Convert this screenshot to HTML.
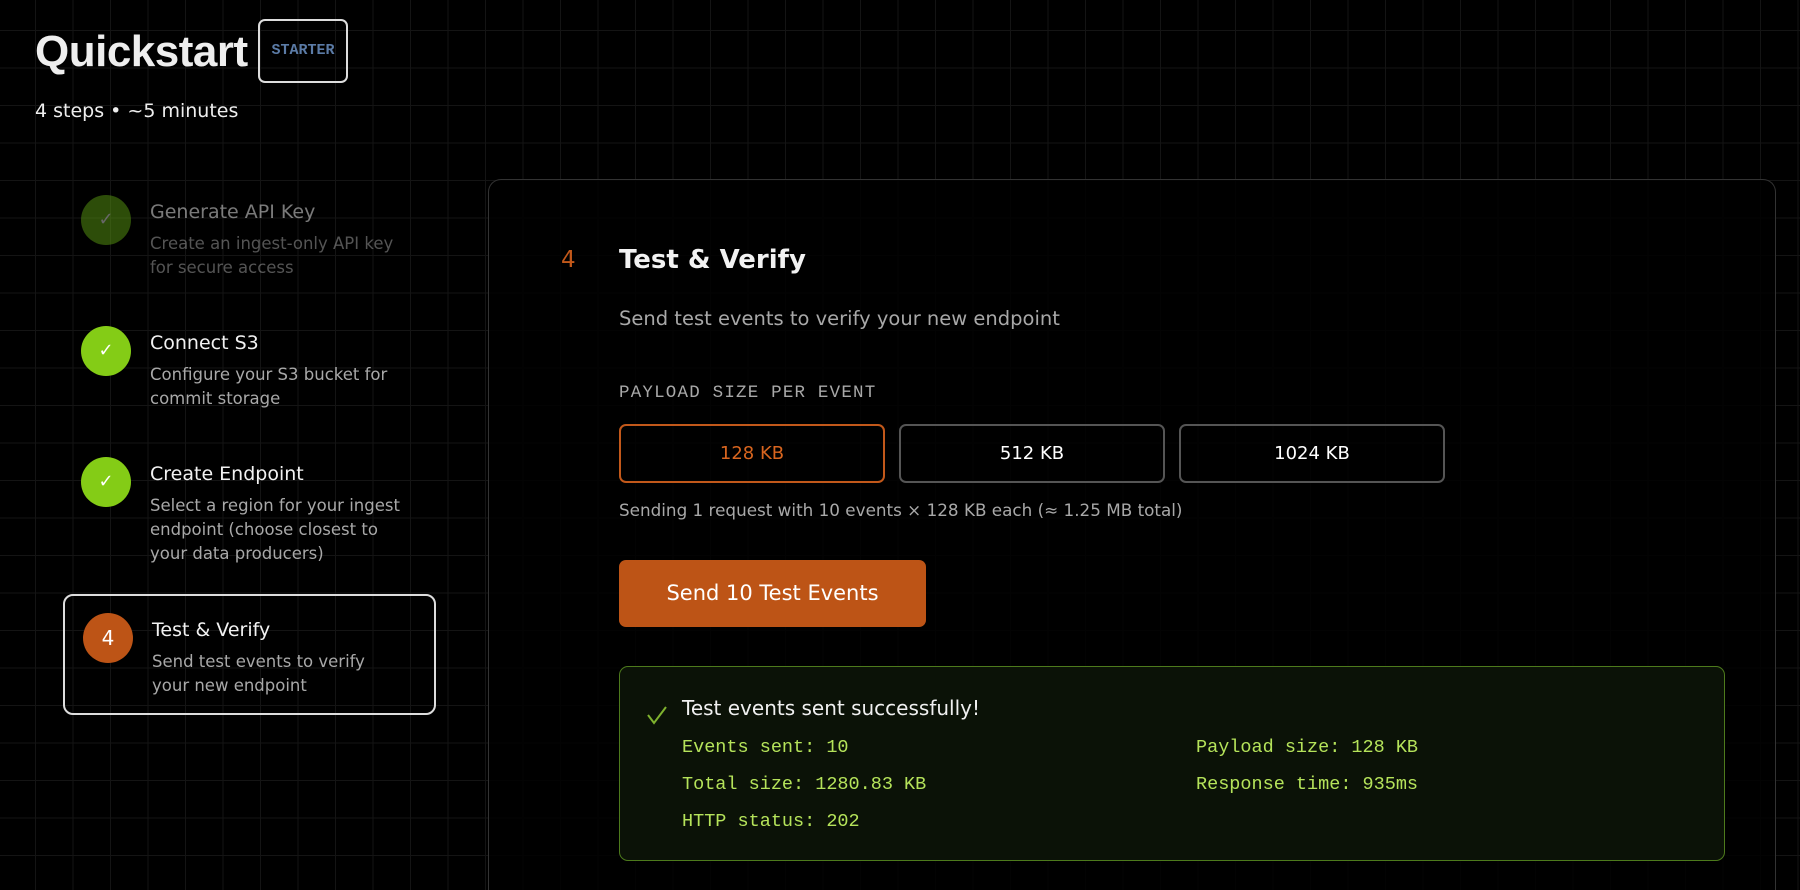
<!DOCTYPE html>
<html><head><meta charset="utf-8"><style>
*{margin:0;padding:0;box-sizing:border-box}
html,body{width:1800px;height:890px;overflow:hidden}
body{background-color:#000;background-image:linear-gradient(to right,#141414 1px,transparent 1px),linear-gradient(to bottom,#141414 1px,transparent 1px);background-size:37.5px 37.5px;background-position:35px 30px;font-family:"DejaVu Sans","Liberation Sans",sans-serif;color:#fff;position:relative}
.a{position:absolute;white-space:nowrap}
.mono{font-family:"Liberation Mono",monospace}
.circ{position:absolute;width:50px;height:50px;border-radius:50%;background:#84cc16;color:#fff;text-align:center;line-height:50px;font-size:18px}
.st{font-size:19px;color:#f2f2f2}
.sd{font-size:16.5px;color:#a8a8a8;line-height:24px}
.opt{position:absolute;top:424px;height:59px;width:266px;border:2px solid #555;border-radius:7px;text-align:center;line-height:55px;font-size:18px;color:#fff}
.row{font-size:18.5px;color:#b5e35a}
</style></head><body>
<div class="a" style="left:35px;top:27px;font-size:44px;font-weight:bold;color:#eee;font-family:'Liberation Sans',sans-serif;letter-spacing:-0.5px">Quickstart</div>
<div class="a mono" style="left:258px;top:19px;width:90px;height:64px;border:2px solid #ddd;border-radius:7px;text-align:center;line-height:60px;font-size:15px;font-weight:bold;color:#5b7ba6">STARTER</div>
<div class="a" style="left:35px;top:100px;font-size:19px;color:#eee">4 steps • ~5 minutes</div>

<div style="opacity:.5">
<div class="circ" style="left:81px;top:195px;background:#5a9a12;color:#ccc">✓</div>
<div class="a st" style="left:150px;top:201px">Generate API Key</div>
<div class="a sd" style="left:150px;top:232px">Create an ingest-only API key<br>for secure access</div>
</div>

<div class="circ" style="left:81px;top:326px">✓</div>
<div class="a st" style="left:150px;top:332px">Connect S3</div>
<div class="a sd" style="left:150px;top:363px">Configure your S3 bucket for<br>commit storage</div>

<div class="circ" style="left:81px;top:457px">✓</div>
<div class="a st" style="left:150px;top:463px">Create Endpoint</div>
<div class="a sd" style="left:150px;top:494px">Select a region for your ingest<br>endpoint (choose closest to<br>your data producers)</div>

<div class="a" style="left:63px;top:594px;width:373px;height:121px;border:2px solid #ddd;border-radius:10px"></div>
<div class="circ" style="left:83px;top:613px;background:#bd5416;font-size:20px">4</div>
<div class="a st" style="left:152px;top:619px">Test &amp; Verify</div>
<div class="a sd" style="left:152px;top:650px">Send test events to verify<br>your new endpoint</div>

<div class="a" style="left:488px;top:179px;width:1288px;height:711px;border:1px solid #333;border-bottom:none;border-radius:13px 13px 0 0;background:rgba(0,0,0,.85)"></div>
<div class="a" style="left:561px;top:247px;font-size:23px;color:#c2581a">4</div>
<div class="a" style="left:619px;top:245px;font-size:26px;font-weight:bold;color:#f2f2f2">Test &amp; Verify</div>
<div class="a" style="left:619px;top:307px;font-size:19.5px;color:#a8a8a8">Send test events to verify your new endpoint</div>
<div class="a mono" style="left:619px;top:383px;font-size:17.5px;color:#a8a8a8;letter-spacing:1.2px">PAYLOAD SIZE PER EVENT</div>
<div class="opt" style="left:619px;border-color:#c2581a;color:#d8651f">128 KB</div>
<div class="opt" style="left:899px">512 KB</div>
<div class="opt" style="left:1179px">1024 KB</div>
<div class="a" style="left:619px;top:500px;font-size:16.8px;color:#a8a8a8">Sending 1 request with 10 events × 128 KB each (≈ 1.25 MB total)</div>
<div class="a" style="left:619px;top:560px;width:307px;height:67px;border-radius:7px;background:#bd5416;text-align:center;line-height:67px;font-size:21px;color:#fff">Send 10 Test Events</div>

<div class="a" style="left:619px;top:666px;width:1106px;height:195px;border:1.5px solid #4d7a1c;border-radius:9px;background:#0b1207"></div>
<svg class="a" style="left:645px;top:703px" width="24" height="24" viewBox="0 0 24 24"><path d="M3 12 L9 20 L21 4" fill="none" stroke="#7fb22e" stroke-width="2"/></svg>
<div class="a" style="left:682px;top:696px;font-size:20px;color:#f0f0f0">Test events sent successfully!</div>
<div class="a mono row" style="left:682px;top:737px">Events sent: 10</div>
<div class="a mono row" style="left:682px;top:774px">Total size: 1280.83 KB</div>
<div class="a mono row" style="left:682px;top:811px">HTTP status: 202</div>
<div class="a mono row" style="left:1196px;top:737px">Payload size: 128 KB</div>
<div class="a mono row" style="left:1196px;top:774px">Response time: 935ms</div>
</body></html>
